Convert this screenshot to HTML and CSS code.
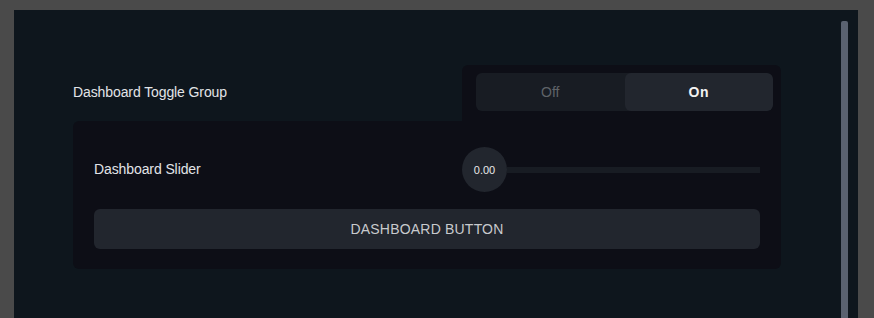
FILE: index.html
```html
<!DOCTYPE html>
<html lang="en">
<head>
    <meta charset="UTF-8">
    <meta name="viewport" content="width=device-width, initial-scale=1.0">
    <title>Dashboard</title>
    <link rel="stylesheet" href="styles.css">
</head>
<body>
    <div class="panel">
        <div class="content">
            <div class="toggle-row">
                <span class="label">Dashboard Toggle Group</span>
                <div class="toggle-box">
                    <div class="segments">
                        <span class="segment off">Off</span>
                        <span class="segment on">On</span>
                    </div>
                </div>
            </div>
            <div class="card">
                <div class="slider-row">
                    <span class="label">Dashboard Slider</span>
                    <div class="slider">
                        <span class="knob">0.00</span>
                        <span class="track"></span>
                    </div>
                </div>
                <button class="dash-btn">DASHBOARD BUTTON</button>
            </div>
        </div>
        <div class="scrollbar"></div>
    </div>
</body>
</html>
```

FILE: styles.css
```css
body {
    margin: 0;
    background: #4a4a4a;
    font-family: "Liberation Sans", Arial, sans-serif;
    height: 318px;
    overflow: hidden;
}
.panel {
    margin: 10px 16px 0 14px;
    height: 308px;
    background: #0e161d;
    display: flex;
}
.content {
    flex: 1;
    padding: 55px 0 0 59px;
}
.toggle-row {
    display: flex;
    align-items: center;
    width: 708px;
}
.label {
    color: #e2e4e8;
    font-size: 14px;
    letter-spacing: -0.1px;
}
.toggle-row .label {
    flex: 1;
    margin-top: -2px;
}
.toggle-box {
    width: 297px;
    background: #0d0e16;
    border-radius: 6px 6px 0 0;
    padding: 8px 8px 10px 14px;
}
.segments {
    display: flex;
    height: 38px;
    border-radius: 6px;
    overflow: hidden;
    background: #181c23;
}
.segment {
    flex: 1;
    display: flex;
    align-items: center;
    justify-content: center;
    font-size: 14px;
}
.segment.off {
    color: #5f6368;
}
.segment.on {
    background: #22262e;
    color: #f2f2f2;
    font-weight: bold;
    border-radius: 6px;
    letter-spacing: 0.5px;
}
.card {
    width: 666px;
    background: #0d0e16;
    border-radius: 6px 0 6px 6px;
    padding: 26px 21px 20px 21px;
}
.slider-row {
    display: flex;
    align-items: center;
    height: 45px;
}
.slider-row .label {
    flex: 1;
    margin-top: -2px;
}
.slider {
    width: 298px;
    display: flex;
    align-items: center;
}
.knob {
    width: 45px;
    height: 45px;
    border-radius: 50%;
    background: #22262e;
    color: #e8e8e8;
    font-size: 11px;
    display: flex;
    align-items: center;
    justify-content: center;
    flex-shrink: 0;
}
.track {
    flex: 1;
    height: 6px;
    background: #181c23;
}
.dash-btn {
    display: block;
    width: 100%;
    height: 40px;
    margin-top: 17px;
    border: none;
    border-radius: 6px;
    background: #22262e;
    color: #c8cacd;
    font-family: "Liberation Sans", Arial, sans-serif;
    font-size: 14px;
    letter-spacing: 0.2px;
}
.scrollbar {
    width: 7px;
    margin: 11px 10px 0 0;
    background: #5a6270;
    border-radius: 2px 2px 0 0;
}
```
